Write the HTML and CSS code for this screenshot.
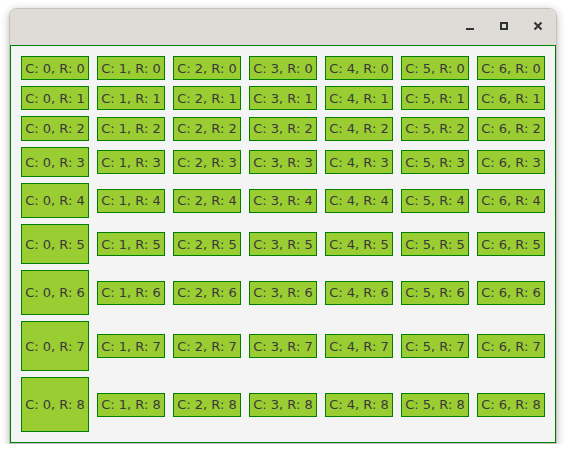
FILE: index.html
```html
<!DOCTYPE html>
<html>
<head>
<meta charset="utf-8">
<link rel="stylesheet" href="styles.css">
</head>
<body>
<div class="window">
  <div class="titlebar">
    <span class="btn"><svg width="10" height="10" viewBox="0 0 10 10"><rect x="1" y="7" width="8" height="2" fill="#2e3436"/></svg></span>
    <span class="btn"><svg width="10" height="10" viewBox="0 0 10 10"><rect x="2" y="2" width="6" height="6" fill="none" stroke="#2e3436" stroke-width="2"/></svg></span>
    <span class="btn"><svg width="10" height="10" viewBox="0 0 10 10"><path d="M1.5 1.5L8.5 8.5M8.5 1.5L1.5 8.5" stroke="#2e3436" stroke-width="2" fill="none"/></svg></span>
  </div>
  <div class="content">
    <div class="grid">
      <div class="cell first">C: 0, R: 0</div><div class="cell">C: 1, R: 0</div><div class="cell">C: 2, R: 0</div><div class="cell">C: 3, R: 0</div><div class="cell">C: 4, R: 0</div><div class="cell">C: 5, R: 0</div><div class="cell">C: 6, R: 0</div>
      <div class="cell first">C: 0, R: 1</div><div class="cell">C: 1, R: 1</div><div class="cell">C: 2, R: 1</div><div class="cell">C: 3, R: 1</div><div class="cell">C: 4, R: 1</div><div class="cell">C: 5, R: 1</div><div class="cell">C: 6, R: 1</div>
      <div class="cell first">C: 0, R: 2</div><div class="cell">C: 1, R: 2</div><div class="cell">C: 2, R: 2</div><div class="cell">C: 3, R: 2</div><div class="cell">C: 4, R: 2</div><div class="cell">C: 5, R: 2</div><div class="cell">C: 6, R: 2</div>
      <div class="cell first">C: 0, R: 3</div><div class="cell">C: 1, R: 3</div><div class="cell">C: 2, R: 3</div><div class="cell">C: 3, R: 3</div><div class="cell">C: 4, R: 3</div><div class="cell">C: 5, R: 3</div><div class="cell">C: 6, R: 3</div>
      <div class="cell first">C: 0, R: 4</div><div class="cell">C: 1, R: 4</div><div class="cell">C: 2, R: 4</div><div class="cell">C: 3, R: 4</div><div class="cell">C: 4, R: 4</div><div class="cell">C: 5, R: 4</div><div class="cell">C: 6, R: 4</div>
      <div class="cell first">C: 0, R: 5</div><div class="cell">C: 1, R: 5</div><div class="cell">C: 2, R: 5</div><div class="cell">C: 3, R: 5</div><div class="cell">C: 4, R: 5</div><div class="cell">C: 5, R: 5</div><div class="cell">C: 6, R: 5</div>
      <div class="cell first">C: 0, R: 6</div><div class="cell">C: 1, R: 6</div><div class="cell">C: 2, R: 6</div><div class="cell">C: 3, R: 6</div><div class="cell">C: 4, R: 6</div><div class="cell">C: 5, R: 6</div><div class="cell">C: 6, R: 6</div>
      <div class="cell first">C: 0, R: 7</div><div class="cell">C: 1, R: 7</div><div class="cell">C: 2, R: 7</div><div class="cell">C: 3, R: 7</div><div class="cell">C: 4, R: 7</div><div class="cell">C: 5, R: 7</div><div class="cell">C: 6, R: 7</div>
      <div class="cell first">C: 0, R: 8</div><div class="cell">C: 1, R: 8</div><div class="cell">C: 2, R: 8</div><div class="cell">C: 3, R: 8</div><div class="cell">C: 4, R: 8</div><div class="cell">C: 5, R: 8</div><div class="cell">C: 6, R: 8</div>
    </div>
  </div>
</div>
</body>
</html>
```
FILE: styles.css
```css
html, body {
  margin: 0;
  background: #ffffff;
}
body {
  padding: 8px 0 0 9px;
  font-family: "DejaVu Sans", sans-serif;
}
.window {
  width: 548px;
  box-sizing: border-box;
  border: 1px solid #c4c0bc;
  border-radius: 8px 8px 0 0;
  box-shadow: 0 2px 9px rgba(0, 0, 0, 0.28);
  background: #f4f4f4;
}
.titlebar {
  height: 36px;
  box-sizing: border-box;
  background: #dfdcd8;
  border-radius: 7px 7px 0 0;
  display: flex;
  justify-content: flex-end;
  align-items: center;
  gap: 10px;
  padding: 0 6px 2px 0;
}
.btn {
  width: 24px;
  height: 24px;
  display: flex;
  align-items: center;
  justify-content: center;
}
.content {
  height: 398px;
  box-sizing: border-box;
  border: 1px solid #008000;
  background: #f4f4f4;
  padding: 10px 0 0 10px;
}
.grid {
  display: grid;
  grid-template-columns: repeat(7, 68px);
  grid-template-rows: 24px 24px 25px 30px 35px 40px 45px 50px 55px;
  column-gap: 8px;
  row-gap: 6px;
}
.cell {
  height: 24px;
  align-self: center;
  box-sizing: border-box;
  background: #9acd32;
  border: 1px solid #008000;
  color: #3a3a3a;
  font-size: 13px;
  display: flex;
  align-items: center;
  justify-content: center;
  white-space: nowrap;
}
.cell.first {
  height: auto;
  align-self: stretch;
}
```
